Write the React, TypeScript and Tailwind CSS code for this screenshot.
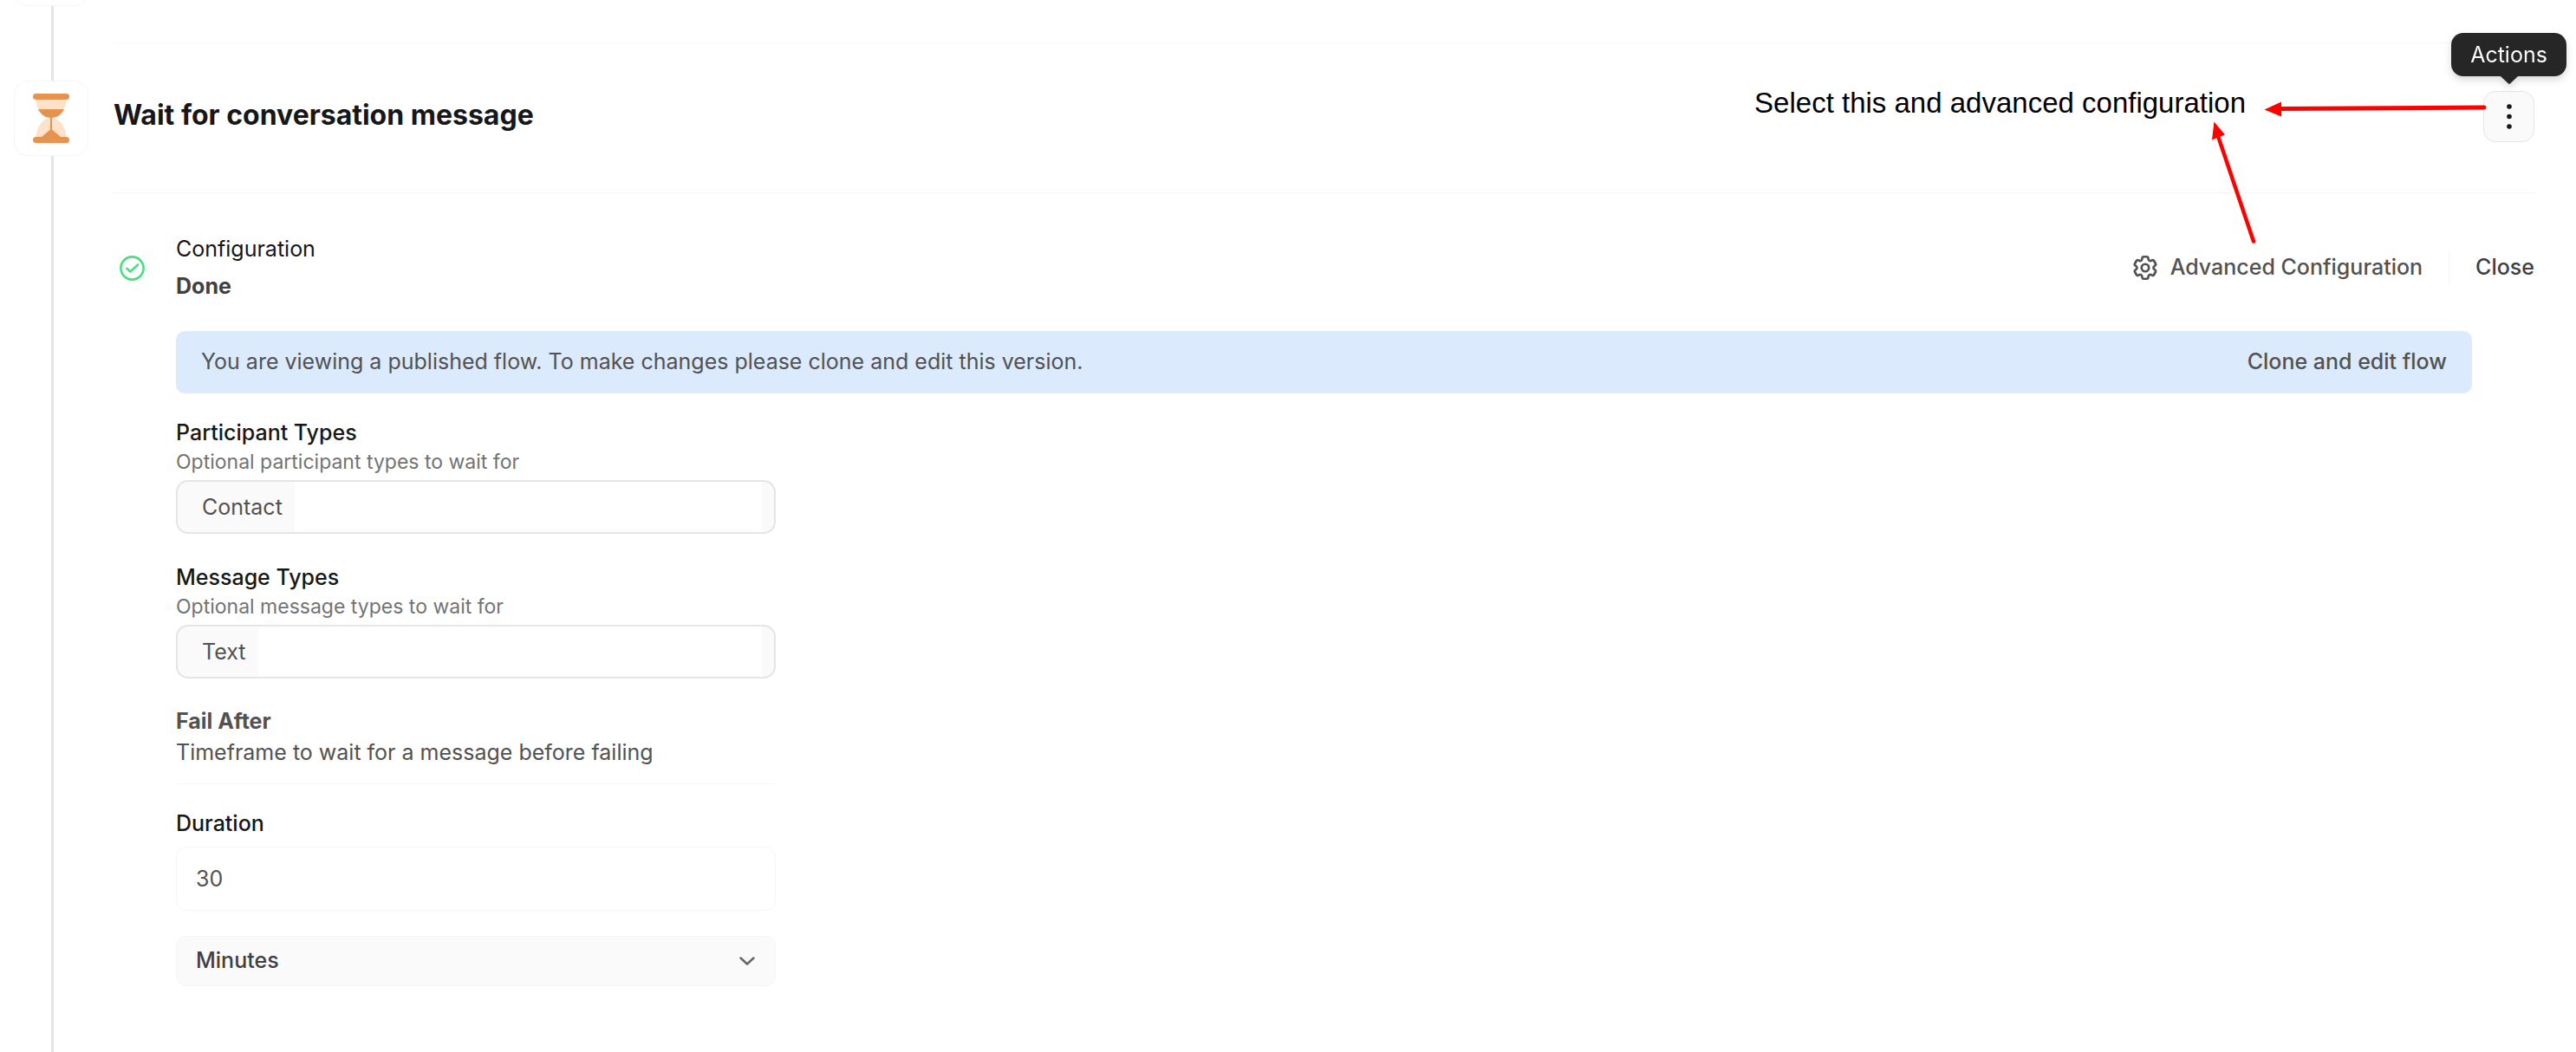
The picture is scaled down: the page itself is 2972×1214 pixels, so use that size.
import { useId } from "react";
import { HiOutlineCog6Tooth } from "react-icons/hi2";

function HourglassIcon() {
  return (
    <svg width="42" height="57" viewBox="0 0 42 57" aria-hidden="true">
      <path d="M3.5 7h35C38.5 17 32 28 21 28S3.5 17 3.5 7z" fill="#fee3ca" />
      <path d="M6 18h30C33 24 28 28 21 28S9 24 6 18z" fill="#e79350" />
      <path d="M3.5 50C4 39 11 28 21 28s17 11 17.500 22z" fill="#fee3ca" />
      <path d="M20 27h2v14.500L32 50H10l10-8.500z" fill="#e79350" />
      <rect width="42" height="7" rx="3.500" fill="#e79350" />
      <rect y="50" width="42" height="7" rx="3.500" fill="#e79350" />
    </svg>
  );
}

function CheckCircle() {
  return (
    <svg width="29" height="29" viewBox="0 0 29 29" fill="none" stroke="#4ade80" strokeLinecap="round" strokeLinejoin="round" aria-hidden="true">
      <circle cx="14.500" cy="14.500" r="13.100" strokeWidth="2.600" />
      <path d="M8.300 14.800l4 3.700 8.800-8" strokeWidth="2.600" />
    </svg>
  );
}

function Timeline() {
  return (
    <div className="flex w-[86px] shrink-0 flex-col">
      <div className="flex h-[7px] items-end overflow-hidden">
        <div className="h-[87px] w-full shrink-0 rounded-2xl border border-neutral-100" />
      </div>
      <div className="ml-[43px] h-[86px] w-[3px] bg-neutral-200" />
      <div className="flex h-[87px] items-center justify-center rounded-2xl border border-neutral-100 bg-white">
        <HourglassIcon />
      </div>
      <div className="ml-[43px] w-[3px] flex-1 bg-neutral-200" />
    </div>
  );
}

function Annotation() {
  return (
    <div className="pointer-events-none absolute top-[41px] right-[56px] flex items-start gap-[21px]">
      <p className="font-['Liberation_Sans',Arial,sans-serif] text-[33px] leading-[56px] text-black">
        Select this and advanced configuration
      </p>
      <svg width="256" height="192" viewBox="0 0 256 192" className="overflow-visible" fill="#ff0000" stroke="#ff0000" aria-hidden="true">
        <path d="M254 33L18 34.500" strokeWidth="5" strokeLinecap="round" />
        <path d="M0.500 35.500L20 26.500v17z" stroke="none" />
        <path d="M-12 187.500L-53 66" strokeWidth="4.500" strokeLinecap="round" />
        <path d="M-57.500 49.500L-60 70.500l15-6z" stroke="none" />
      </svg>
    </div>
  );
}

function ActionsMenu() {
  return (
    <div className="relative flex flex-col items-center">
      <button aria-label="Actions" className="flex h-[59px] w-[59px] items-center justify-center rounded-[14px] border border-neutral-200 bg-neutral-50">
        <svg width="6" height="29" viewBox="0 0 6 29" fill="#171717" aria-hidden="true">
          <circle cx="3" cy="3" r="2.800" />
          <circle cx="3" cy="14.500" r="2.800" />
          <circle cx="3" cy="26" r="2.800" />
        </svg>
      </button>
      <div role="tooltip" className="absolute bottom-[67px] flex flex-col items-center drop-shadow-lg">
        <span className="rounded-[14px] bg-neutral-800 px-[22px] text-[25px] leading-[50px] text-neutral-50">Actions</span>
        <svg width="20" height="9" viewBox="0 0 20 9" className="fill-neutral-800" aria-hidden="true">
          <path d="M0 0h20l-9 8.500q-1 .8-2 0z" />
        </svg>
      </div>
    </div>
  );
}

function TagField({ label, hint, tag }: { label: string; hint: string; tag: string }) {
  const id = useId();
  return (
    <div>
      <label htmlFor={id} className="block leading-[30px] font-medium text-neutral-900">{label}</label>
      <p id={`${id}-hint`} className="mt-1 text-[23px] leading-[30px] text-neutral-500">{hint}</p>
      <div className="mt-1.5 flex h-[62px] overflow-hidden rounded-[14px] border-2 border-neutral-200 bg-neutral-50 pr-3.5">
        <span className="pr-3.5 pl-7 leading-[58px] text-neutral-600">{tag}</span>
        <input id={id} aria-describedby={`${id}-hint`} readOnly className="min-w-0 flex-1 bg-white outline-none" />
      </div>
    </div>
  );
}

export default function App() {
  return (
    <div className="flex min-h-screen gap-[29px] bg-white pr-12 pl-4 font-[Inter,sans-serif] text-[25px] text-neutral-600">
      <Timeline />
      <main className="min-w-0 flex-1 pt-[49px]">
        <header className="relative flex h-[174px] items-start justify-between border-y border-neutral-100 pt-[55px]">
          <h2 className="text-[32px] leading-[56px] font-bold text-neutral-900">Wait for conversation message</h2>
          <ActionsMenu />
          <Annotation />
        </header>

        <section className="pt-[43px]">
          <div className="flex items-center justify-between pl-[7px]">
            <div className="flex items-center gap-9">
              <CheckCircle />
              <div className="leading-[43px]">
                <h3 className="text-neutral-900">Configuration</h3>
                <p className="font-bold text-neutral-700">Done</p>
              </div>
            </div>
            <div className="flex items-center gap-[30px] font-medium">
              <button className="flex items-center gap-3">
                <HiOutlineCog6Tooth size={34} strokeWidth={1.9} />
                Advanced Configuration
              </button>
              <span className="h-[43px] w-px bg-neutral-100" />
              <button className="text-neutral-700">Close</button>
            </div>
          </div>

          <div className="px-[72px]">
            <div className="mt-[30px] flex h-[72px] items-center justify-between rounded-[10px] bg-[#dbeafd] px-[29px]">
              <p>You are viewing a published flow. To make changes please clone and edit this version.</p>
              <button className="font-medium">Clone and edit flow</button>
            </div>

            <form className="w-full max-w-[692px] pt-[30px]">
              <div className="flex flex-col gap-[35px]">
                <TagField label="Participant Types" hint="Optional participant types to wait for" tag="Contact" />
                <TagField label="Message Types" hint="Optional message types to wait for" tag="Text" />
              </div>

              <div className="mt-[31px] border-b border-neutral-100 pb-[18px] leading-[36px]">
                <h4 className="font-bold">Fail After</h4>
                <p>Timeframe to wait for a message before failing</p>
              </div>

              <label htmlFor="duration" className="mt-[30px] block leading-[30px] font-medium text-neutral-900">Duration</label>
              <input
                id="duration"
                defaultValue="30"
                className="mt-3 block h-[74px] w-full rounded-xl border border-neutral-100 bg-white px-[22px] text-neutral-600 outline-none"
              />
              <div className="relative mt-[29px]">
                <select
                  aria-label="Duration unit"
                  defaultValue="Minutes"
                  className="block h-[58px] w-full appearance-none rounded-xl border border-neutral-100 bg-neutral-50 px-[22px] font-medium text-neutral-700 outline-none"
                >
                  <option>Minutes</option>
                  <option>Hours</option>
                  <option>Days</option>
                </select>
                <svg width="18" height="10" viewBox="0 0 18 10" fill="none" stroke="#666666" strokeWidth="2.500" strokeLinecap="round" strokeLinejoin="round" className="pointer-events-none absolute top-6 right-6" aria-hidden="true">
                  <path d="M1.500 1.500L9 8.500l7.500-7" />
                </svg>
              </div>
            </form>
          </div>
        </section>
      </main>
    </div>
  );
}
